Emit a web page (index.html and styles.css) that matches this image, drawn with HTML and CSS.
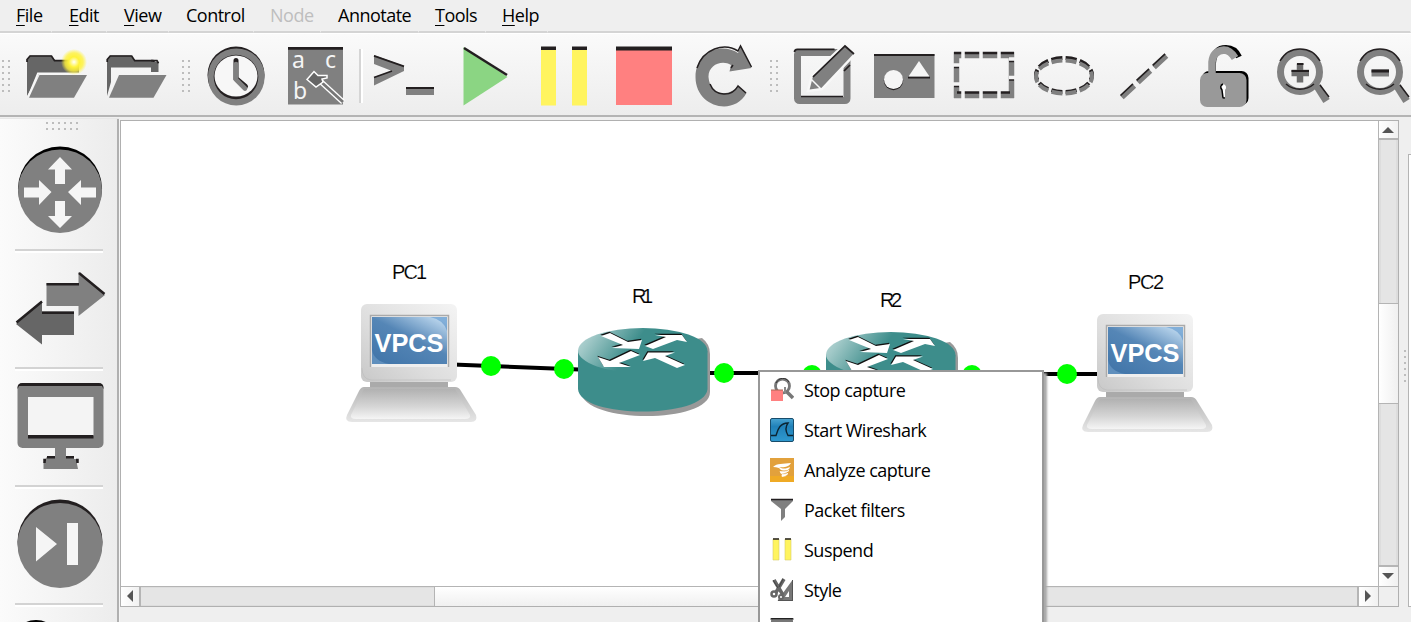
FILE: index.html
```html
<!DOCTYPE html>
<html lang="en">
<head>
<meta charset="utf-8">
<title>Network topology</title>
<link rel="stylesheet" href="styles.css">
</head>
<body>
<div class="app">
<nav class="menubar">
<span class="menu file"><u>F</u>ile</span><span class="menu edit"><u>E</u>dit</span><span class="menu view"><u>V</u>iew</span><span class="menu control">Control</span><span class="menu node off">Node</span><span class="menu annotate">Annotate</span><span class="menu tools"><u>T</u>ools</span><span class="menu help"><u>H</u>elp</span><span class="menu rest"></span>
</nav>
<header class="toolbar">
<div class="grip first"><i></i></div>
<svg class="tool" viewBox="16 34 80 81"><defs><radialGradient id="glow"><stop offset="0" stop-color="#fff"/><stop offset=".2" stop-color="#fff99a"/><stop offset=".4" stop-color="#fff33b"/><stop offset=".7" stop-color="#fff23b" stop-opacity=".8"/><stop offset="1" stop-color="#fff23b" stop-opacity="0"/></radialGradient></defs>
<path d="M27 96V60l3-4.500h21l4.500 5H77l2 2.500V74H39z" fill="#666"/><path d="M27 62V59.500l3-3.500h21.500l3 4.700H77.500l1.500 2.500" fill="none" stroke="#231f20" stroke-width="1.700"/><path d="M28.500 96.500 38 73.500H79" fill="none" stroke="#f7f7f7" stroke-width="2"/><path d="M39.500 75H87L74 97.700H29z" fill="#808080"/><circle cx="74" cy="62" r="13" fill="url(#glow)"/></svg>
<svg class="tool" viewBox="96 34 80 81"><path d="M107 96V60l3-4.500h21l4.500 5H153l2 2.500V72H151V67.500H111V82z" fill="#666"/><path d="M107.200 62V59.500l3-3.500h21.500l3 4.700H153l2 2.500" fill="none" stroke="#231f20" stroke-width="1.700"/><path d="M151 62h7.500v10H155v-4.500h-4z" fill="#666"/><path d="M151 60.700h6l1.500 2.500" fill="none" stroke="#231f20" stroke-width="1.700"/><path d="M119 75H166.500L153.500 97.700H109z" fill="#808080"/></svg>
<div class="grip"><i></i></div>
<svg class="tool" viewBox="196 34 80 81"><circle cx="236" cy="75" r="28.500" fill="#231f20"/><path d="M208 76a28.300 27.500 0 0 1 56.600 0v1a28.300 28.500 0 0 1-56.600 0z" fill="#808080"/><circle cx="236" cy="77" r="22.300" fill="#231f20"/><ellipse cx="236" cy="76" rx="21.500" ry="20.500" fill="#f7f7f7"/><path d="M236 60.500v18l9.500 8" fill="none" stroke="#231f20" stroke-width="5" stroke-linecap="round"/><path d="M236 64v15.500l9 9" fill="none" stroke="#808080" stroke-width="4.600" stroke-linecap="round"/></svg>
<svg class="tool abc" viewBox="276 34 80 81"><path d="M288 47h55v57.500h-55z" fill="#808080"/><path d="M288 47h55v2.800h-55z" fill="#231f20"/><text x="292" y="68">a</text><text x="325" y="68">c</text><text x="293" y="99">b</text><path d="m319 80 24 22" stroke="#fff" stroke-width="5.500"/><path d="m319 80 24 22" stroke="#777" stroke-width="2.800"/><path d="m307 79.500 7-8 4 4h9v2.500l-5 1 1 3-7 5z" fill="#666" stroke="#fff" stroke-width="1.500"/></svg>
<div class="toolsep"></div>
<svg class="tool" viewBox="364 34 80 81"><path d="m374 55 30 11v5l-30 14.500V77l18-6-18-7z" fill="#808080"/><path d="m374 55.800 30 10.500M374 77.500l18-6.500M406 88h28" stroke="#231f20" stroke-width="1.800" fill="none"/><path d="M406 89h28v6h-28z" fill="#808080"/></svg>
<svg class="tool" viewBox="444 34 80 81"><path d="m463.500 47 44 30-44 28.500z" fill="#8bd583"/><path d="m464 48 43 27" stroke="#231f20" stroke-width="2.600"/></svg>
<svg class="tool" viewBox="524 34 80 81"><path d="M541 47h15v58.500h-15zM572 47h15v58.500h-15z" fill="#fff45f"/><path d="M541 46.500h15V50h-15zM572 46.500h15V50h-15z" fill="#231f20"/></svg>
<svg class="tool" viewBox="604 34 80 81"><path d="M616 47h56v58h-56z" fill="#ff8080"/><path d="M616 46.500h56v4h-56z" fill="#231f20"/></svg>
<svg class="tool" viewBox="684 34 80 81"><path d="m741 46 10.500 22-22 3.500 1.500-6.500c-9-6-23 0-22.500 12 1 18 20 21 29 9l9 7c-13 24-51 14-51-16 0-26 27-35 42.500-24z" fill="#808080"/><path d="M697 68c6-19 27-26 41-17l2.500-5 11 21M710 84c5 13 22 13 28 2l8 7M731 68l2-3" fill="none" stroke="#231f20" stroke-width="1.500"/></svg>
<div class="grip"><i></i></div>
<svg class="tool" viewBox="784 34 80 81"><rect x="797.500" y="52.500" width="49.500" height="48" rx="2" fill="none" stroke="#808080" stroke-width="7"/><path d="M794.500 52q0-2.500 3-2.700h37M801 96.500h42" fill="none" stroke="#231f20" stroke-width="1.700"/><path d="m812 75 33-31 10 10-33 35-14 2z" fill="#808080" stroke="#f7f7f7" stroke-width="2.500"/><path d="m813 77 32-31 9 8M844 71l6-6" stroke="#231f20" stroke-width="1.700" fill="none"/><path d="m811 79 10 10" stroke="#f7f7f7" stroke-width="1.500"/></svg>
<svg class="tool" viewBox="864 34 80 81"><path d="M874 54h60.500v44H874z" fill="#808080"/><path d="M874 54h60.500v2H874zM908 76.500h22v2h-22z" fill="#231f20"/><circle cx="893.500" cy="80.500" r="9.700" fill="#231f20"/><circle cx="893.500" cy="79.500" r="9.500" fill="#f5f5f5"/><path d="m919 61 10.500 15.500h-21z" fill="#f5f5f5"/></svg>
<svg class="tool" viewBox="944 34 80 81"><path d="M954 55.500h60M956.500 52v46M1011.500 52v46M954 95.500h60" fill="none" stroke="#808080" stroke-width="5.500"/><path d="M954 53h60M957 92.500h53M954 67h5M954 86h5M1009 61h5M1009 79.500h5" stroke="#231f20" stroke-width="2.400"/><path d="M963 51v8M981 51v8M999 51v8M963 91v9M981 91v9M999 91v9M953 65h7M953 84h7M1009 59h6M1009 77.500h6" stroke="#f4f4f4" stroke-width="3.500"/></svg>
<svg class="tool" viewBox="1024 34 80 81"><g fill="none" stroke-dasharray="12 3.640"><ellipse cx="1064" cy="75" rx="28" ry="17" pathLength="156.400" stroke="#231f20" stroke-width="4" stroke-dashoffset="6"/><ellipse cx="1064" cy="77" rx="28" ry="16.500" pathLength="156.400" stroke="#808080" stroke-width="4" stroke-dashoffset="6"/></g></svg>
<svg class="tool" viewBox="1104 34 80 81"><path d="m1122 97.500 45-42" stroke="#808080" stroke-width="5" stroke-dasharray="17 5"/><path d="m1120.500 95.500 45-42" stroke="#231f20" stroke-width="1.700" stroke-dasharray="17 5"/></svg>
<svg class="tool" viewBox="1184 34 80 81"><path d="M1213 76V63q1-15 13-15 9 0 13 9" fill="none" stroke="#000" stroke-width="6"/><rect x="1202" y="71" width="46.500" height="34" rx="7" fill="#000"/><path d="M1212 76V62q1-11 12-12 6 0 11 8" fill="none" stroke="#999" stroke-width="7.500"/><rect x="1200" y="73" width="46.500" height="34" rx="7" fill="#999"/><path d="M1223 84a3.500 3.500 0 0 1 2 6v9h-3v-9q-4-5 1-6z" fill="#fff"/><path d="M1223 84q-4 2-1 6l1 8h2" fill="none" stroke="#000" stroke-width="1.500"/></svg>
<svg class="tool" viewBox="1264 34 80 81"><path d="m1317 86 9.500 15" stroke="#808080" stroke-width="7.500"/><circle cx="1300" cy="72" r="19.500" fill="none" stroke="#808080" stroke-width="7"/><path d="M1280 61c9-16 31-16 40 0M1286 84c8 7 20 7 28 0M1320 85l9 12" fill="none" stroke="#231f20" stroke-width="1.500"/><path d="M1291.500 73h17.500M1300 63.500v19" stroke="#6d6d6d" stroke-width="6.500"/><path d="M1291.500 71h17.500M1297 64h6.500" stroke="#231f20" stroke-width="2"/></svg>
<svg class="tool" viewBox="1344 34 80 81"><path d="m1397 86 9.500 15" stroke="#808080" stroke-width="7.500"/><circle cx="1380" cy="72" r="19.500" fill="none" stroke="#808080" stroke-width="7"/><path d="M1360 61c9-16 31-16 40 0M1366 84c8 7 20 7 28 0M1400 85l9 12" fill="none" stroke="#231f20" stroke-width="1.500"/><path d="M1371.500 73h17.500" stroke="#808080" stroke-width="7"/><path d="M1371.500 71h17.500" stroke="#231f20" stroke-width="3"/></svg>
</header>
<div class="work">
<aside class="side">
<div class="grip wide"><i></i></div>
<svg class="device" viewBox="0 132 117 118"><circle cx="60" cy="188.500" r="42" fill="#000"/><path d="M18 190a42 40.500 0 0 1 84 0 42 43 0 0 1-84 0z" fill="#808080"/><path d="m60 157 12 12.500h-7V184H55v-14.500h-7zM60 228l12-12h-7v-15H55v15h-7zM51.500 192 39 180v7.500H24v10h15v7.500zM68 192l13-12v7.500h15v10H81v7.500z" fill="#f5f5f5"/></svg>
<svg class="device" viewBox="0 250 117 118"><path d="M46.500 283H78.500V272L105 295 78.500 316V306h-32z" fill="#808080"/><path d="M46.500 284.300H79M79 273l25.500 21" stroke="#231f20" stroke-width="2.500" fill="none"/><path d="M74 311.500H42V301L16 324l26 20.500V335h32z" fill="#666"/><path d="M74 312.700H42M42 301.500 16.500 322.500" stroke="#231f20" stroke-width="2.500" fill="none"/></svg>
<svg class="device" viewBox="0 368 117 118"><rect x="17.500" y="383" width="86" height="65" rx="5" fill="#808080"/><path d="M17.500 389v-1q0-5 5-5h76q5 0 5 5v1l-1.500-3H19z" fill="#231f20"/><path d="M28 397h65.500v39H28z" fill="#f4f4f4"/><path d="M28 435h65.500v3.500H28z" fill="#231f20"/><path d="M55 447h11v9h8v3h3v5l1 5H43.500v-6l2-4 2-3H55z" fill="#808080"/><path d="M47 457.300h8M66 457.300h8M44.500 463v-3h1.500M77.500 463v-3H76" fill="none" stroke="#231f20" stroke-width="2.500"/></svg>
<svg class="device" viewBox="0 486 117 118"><circle cx="60" cy="542" r="42.500" fill="#231f20"/><path d="M17.500 544a42.500 41 0 0 1 85 0 42.500 44 0 0 1-85 0z" fill="#808080"/><path d="m36 527 21 17-21 17.500zM67 523h11v42H67z" fill="#f5f5f5"/></svg>
<svg class="device last" viewBox="0 604 117 18"><path d="M25 624c5-4 17-4 22 0" fill="#555" stroke="#000" stroke-width="2"/></svg>
</aside>
<main class="scene">
<div class="viewport">
<svg class="topology" viewBox="121 121 1257 465">
<defs>
<linearGradient id="case" x1="1" y1="0" x2="0" y2="1"><stop offset="0" stop-color="#f4f4f4"/><stop offset=".6" stop-color="#ddd"/><stop offset="1" stop-color="#c8c8c8"/></linearGradient>
<linearGradient id="screen" x1=".8" y1="0" x2=".2" y2="1"><stop offset="0" stop-color="#82afd9"/><stop offset=".45" stop-color="#5383b4"/><stop offset="1" stop-color="#5f8fbd"/></linearGradient>
<linearGradient id="shine" x1=".9" y1="0" x2=".1" y2="1"><stop offset="0" stop-color="#c0daf0"/><stop offset=".45" stop-color="#5586b6"/><stop offset="1" stop-color="#4175a9"/></linearGradient>
<linearGradient id="keys" x1="0" y1="0" x2="0" y2="1"><stop offset="0" stop-color="#b0b0b0"/><stop offset=".6" stop-color="#d8d8d8"/><stop offset="1" stop-color="#fafafa"/></linearGradient>
<linearGradient id="base" x1="0" y1="0" x2="0" y2="1"><stop offset="0" stop-color="#b4b4b4"/><stop offset="1" stop-color="#e6e6e6"/></linearGradient>
<linearGradient id="disc" x2="1" y2=".25"><stop offset="0" stop-color="#c2dddc"/><stop offset=".15" stop-color="#a0c8c7"/><stop offset=".5" stop-color="#3d8d8b"/><stop offset="1" stop-color="#3d8d8b"/></linearGradient>
<g id="pc"><path d="M40 80h78v8H40z" fill="#aaa"/><rect x="31" y="4" width="96" height="78" rx="6" fill="url(#case)"/><path d="M32 68q0 11 9 12h80" fill="none" stroke="#bbb" opacity=".6"/><path d="M40 15h79v52H40z" fill="#eee"/><path d="M40.500 67V15.500h78V67" fill="none" stroke="#aaa" stroke-width="1.500"/><path d="M42 17h75v47H42z" fill="url(#screen)"/><path d="M42 17h58q14 3 17 14v33H59q-15-3-17-14z" fill="url(#shine)"/><path d="M34 87h91q4 0 6 4l15 24q2 7-5 7H22q-8 0-5-7l12-24q2-4 5-4z" fill="url(#base)"/><path d="M34 89h91l15 26q1 4-5 4H26q-6 0-5-4z" fill="url(#keys)" opacity=".8"/><text x="44.500" y="52" class="vpcs" textLength="69" lengthAdjust="spacingAndGlyphs">VPCS</text></g>
<g id="router"><path d="M3 30v34c3 32 129 32 129 0V26q0-10-8-16z" fill="#999"/><path d="M0 23v38c2 30 127 30 129.500 0V23z" fill="#3d8d8b"/><ellipse cx="64.700" cy="22.500" rx="64.700" ry="22.500" fill="url(#disc)"/><path transform="translate(-.7 -1.300)" d="M23 8 32 5 50 14 64 12 61 21 34 20 45 17zM67 18 88 9 77 7H104L109 14 99 12 75 21zM62 27 53 23 32 33 20 29 26 39H53L41 35zM65 33 70 24.500H97L87 28 107 37 99 40 77 30z" fill="#111"/><path d="M23 8 32 5 50 14 64 12 61 21 34 20 45 17zM67 18 88 9 77 7H104L109 14 99 12 75 21zM62 27 53 23 32 33 20 29 26 39H53L41 35zM65 33 70 24.500H97L87 28 107 37 99 40 77 30z" fill="#fff"/></g>
</defs>
<path d="m440 364 204 8M644 373h247M891 374h253" stroke="#000" stroke-width="4"/>
<use href="#pc" x="330" y="300"/><use href="#pc" x="1066" y="310"/>
<use href="#router" x="578" y="328"/><use href="#router" x="826" y="332"/>
<g fill="#0f0"><circle cx="491" cy="366" r="10"/><circle cx="564" cy="369" r="10"/><circle cx="724" cy="373" r="10"/><circle cx="812" cy="375" r="10"/><circle cx="972" cy="375" r="10"/><circle cx="1067" cy="374" r="10"/></g>
<g class="label"><text x="392" y="279" textLength="35">PC1</text><text x="632" y="303" textLength="21">R1</text><text x="880" y="307" textLength="22">R2</text><text x="1128" y="289" textLength="36">PC2</text></g>
</svg>
</div>
<div class="vbar"><span class="step up"></span><span class="groove above"></span><span class="thumb"></span><span class="groove"></span><span class="step down"></span></div>
<div class="hbar"><span class="step left"></span><span class="groove before"></span><span class="thumb"></span><span class="groove"></span><span class="step right"></span></div>
<div class="corner"></div>
</main>
<aside class="dock"><i class="dots"></i><div class="panel"></div></aside>
</div>
<div class="popup">
<div class="entry"><svg viewBox="0 0 24 24"><circle cx="12.500" cy="8" r="7" fill="none" stroke="#777" stroke-width="2.800"/><path d="M6 5c3-6 10-6 13-1" fill="none" stroke="#333"/><path d="m17 14 6 6" stroke="#777" stroke-width="3.500"/><path d="M14 9h2v6h-2z" fill="#888"/><path d="M1 12h12v11H1z" fill="#ff8080"/><path d="M1 12h12" stroke="#a65"/></svg><span>Stop capture</span></div>
<div class="entry"><svg viewBox="0 0 24 24"><defs><linearGradient id="sea" x1="0" y1="0" x2="0" y2="1"><stop offset="0" stop-color="#4aa5d2"/><stop offset=".35" stop-color="#2081b9"/><stop offset="1" stop-color="#2f99cf"/></linearGradient></defs><rect x=".5" y=".5" width="23" height="23" rx="1.500" fill="url(#sea)" stroke="#184c6b"/><path d="M1 17.500h5C8 12 9 5.500 18 5c-3 4-2 9 0 12.500h5" fill="none" stroke="#0b2533" stroke-width="1.400"/></svg><span>Start Wireshark</span></div>
<div class="entry"><svg viewBox="0 0 24 24"><path d="M0 0h24v24H0z" fill="#e2a13c"/><path d="M0 18h24v6H0z" fill="#efaa25"/><path d="M3 9c4-4 10-3 18-4-2 4-8 5-12 4 5 3 8 1 11 0-1 4-5 4-9 3l-2-2q-3-1-6-1z" fill="#fff"/><path d="M10 13.500q5 1 9-1-3 3-8 3zM12 16.500q3 0 6-1-2 3-6 3z" fill="#fff" stroke="#fff" stroke-width=".7"/></svg><span>Analyze capture</span></div>
<div class="entry"><svg viewBox="0 0 24 24"><path d="M1 1h22v2l-8 8v8l-4 4V11L1 3z" fill="#808080"/><path d="M1 1.500h22" stroke="#231f20" stroke-width="1.500"/></svg><span>Packet filters</span></div>
<div class="entry"><svg viewBox="0 0 24 24"><path d="M3 1h6v21H3zM15 1h6v21h-6z" fill="#fff45f" stroke="#d7ce68" stroke-width=".6"/><path d="M3 1h6M15 1h6" stroke="#231f20" stroke-width="1.500"/></svg><span>Suspend</span></div>
<div class="entry"><svg viewBox="0 0 24 24"><path d="M22.500 2v20.500H7.500zM19 13v6h-4z" fill="#777" fill-rule="evenodd"/><path d="m4 2 9 15M14 1 5 16" stroke="#666" stroke-width="3.500"/><path d="m3 2 5 8M13 1l-4 8" stroke="#444" fill="none"/><path d="M22.500 2v20M8 22.500h15" stroke="#555" fill="none"/><circle cx="4" cy="16" r="2.500" fill="#fff" stroke="#666" stroke-width="2.500"/><circle cx="11" cy="19" r="2" fill="#fff" stroke="#666" stroke-width="2"/></svg><span>Style</span></div>
<div class="entry"><svg viewBox="0 0 24 24"><rect x="1" y=".5" width="22" height="22" rx="2" fill="#777"/><path d="M1 1.500q0-1 2-1h18q2 0 2 1" fill="none" stroke="#222" stroke-width="1.500"/></svg></div>
</div>
</div>
</body>
</html>
```
FILE: styles.css
```css
* { box-sizing: border-box; }
body { margin: 0; background: #efefef; font-family: "Open Sans", "Noto Sans", sans-serif; font-size: 18px; letter-spacing: -.5px; color: #000; }
.app { position: relative; width: 1411px; height: 622px; overflow: hidden; display: flex; flex-direction: column; }
svg { display: block; flex: none; letter-spacing: 0; }
.menubar { display: flex; height: 34px; border-bottom: 1px solid #fff; }
.menu { height: 33px; padding-left: 17px; line-height: 31px; border-bottom: 2px solid #d4d4d4; border-right: 1px solid #efefef; white-space: nowrap; flex: none; }
.menu u { text-decoration-thickness: 1px; text-underline-offset: 3px; }
.file { width: 52px; padding-left: 16px; }
.edit { width: 55px; }
.view { width: 62px; }
.control { width: 85px; }
.node { width: 67px; padding-left: 16px; }
.annotate { width: 98px; }
.tools { width: 67px; padding-left: 16px; }
.help { width: 62px; padding-left: 16px; }
.rest { flex: 1; }
.off { color: #bebebe; }
.toolbar { display: flex; height: 83px; border-bottom: 2px solid #b4b4b4; background: linear-gradient(#fafafa, #ededed); overflow: hidden; flex: none; }
.tool { width: 80px; height: 81px; }
.abc text { font: 23px "Noto Sans", sans-serif; fill: #f5f5f5; }
.grip { width: 20px; flex: none; padding: 26px 0 0 6px; }
.grip.first { width: 16px; padding-left: 2px; }
.grip i { display: block; width: 9px; height: 33px; background: conic-gradient(from 90deg at 2px 2px, transparent 0 50%, #bdbdbd 0 75%, transparent 0) 0 0 / 6px 6px; }
.toolsep { width: 8px; flex: none; padding: 0; background: linear-gradient(90deg, transparent 3px, #d5d5d5 3px 5px, #fff 5px 7px, transparent 7px) 0 15px / 8px 54px no-repeat; }
.work { flex: 1; min-height: 0; display: flex; padding-top: 1px; background: #efefef; }
.side { width: 120px; height: 504px; flex: none; background: linear-gradient(90deg, #fbfbfb, #ececec); border-right: 1px solid #f4f4f4; overflow: hidden; box-shadow: inset -2px 0 #b0b0b0; border-top: 1px solid #e7e7e7; }
.grip.wide { width: 117px; height: 13px; padding: 3px 0 0 46px; }
.grip.wide i { width: 33px; height: 8px; }
.device { width: 117px; height: 118px; background: linear-gradient(#d3d3d3, #d3d3d3) 15px 117px / 88px 1px no-repeat, linear-gradient(#d3d3d3 1px, #fff 1px) 15px 0 / 88px 3px no-repeat; }
.device:nth-child(2) { background: linear-gradient(#d3d3d3, #d3d3d3) 15px 117px / 88px 1px no-repeat; }
.device.last { height: 18px; }
.scene { width: 1279px; height: 487px; margin-top: 2px; flex: none; display: grid; grid-template: 465px 20px / 1257px 20px; border: 1px solid #b0b0b0; }
.viewport { background: #fff; }
.topology { width: 1257px; height: 465px; }
.vpcs { font: bold 26px "Liberation Sans", sans-serif; fill: #fff; }
.label text { font: 20px "Liberation Sans", sans-serif; fill: #000; stroke: #fff; stroke-width: .12px; }
.vbar { display: flex; flex-direction: column; border-left: 1px solid #b4b4b4; }
.hbar { display: flex; border-top: 1px solid #b4b4b4; }
.step { display: grid; place-items: center; background: linear-gradient(90deg, #fff, #f1f1f1); flex: none; }
.step::before { content: ""; border: 6px solid transparent; }
.vbar .step { padding-right: 1px; }
.up { height: 19px; border-bottom: 2px solid #b5b5b5; }
.up::before { border-top: 0; border-bottom-color: #555; }
.down { height: 21px; padding-bottom: 2px; border-top: 2px solid #b5b5b5; }
.down::before { border-bottom: 0; border-top-color: #555; }
.left { width: 20px; border-right: 2px solid #b5b5b5; }
.left::before { border-left: 0; border-right-color: #555; }
.right { width: 21px; padding-right: 2px; border-left: 2px solid #b5b5b5; }
.right::before { border-right: 0; border-left-color: #555; }
.hbar .step { padding-bottom: 1px; }
.vbar .groove { flex: 1; background: #e5e5e5; border: solid #ddd; border-width: 0 2px; }
.vbar .above { flex: none; height: 163px; }
.vbar .thumb { height: 101px; flex: none; border: solid #b4b4b4; border-width: 1px 0; background: linear-gradient(90deg, #fff, #f0f0f0); }
.hbar .groove { flex: 1; background: #e5e5e5; border: solid #ddd; border-width: 1px 0; }
.hbar .before { width: 293px; flex: none; }
.hbar .thumb { width: 484px; flex: none; border: solid #b4b4b4; border-width: 0 1px; background: linear-gradient(#fff, #f0f0f0); }
.corner { border: solid #b4b4b4; border-width: 1px 0 0 1px; }
.dock { width: 12px; height: 490px; display: flex; align-items: flex-start; padding-top: 36px; }
.dots { width: 3px; height: 33px; margin: 196px 1px 0 5px; background: conic-gradient(from 90deg at 2px 2px, transparent 0 50%, #bdbdbd 0 75%, transparent 0) 0 0 / 6px 6px; flex: none; }
.panel { width: 3px; height: 453px; background: #fff; border: solid #b4b4b4; border-width: 1px 0 1px 1px; }
.popup { position: absolute; left: 758px; top: 370px; width: 286px; height: 290px; background: #fff; border: 2px solid #989898; box-shadow: 3px 3px 2px #aaa; }
.entry { height: 40px; display: flex; align-items: center; padding-left: 10px; gap: 10px; }
.entry svg { width: 24px; height: 24px; margin-top: -4px; }
.entry span { margin-top: -5px; white-space: nowrap; }
```
